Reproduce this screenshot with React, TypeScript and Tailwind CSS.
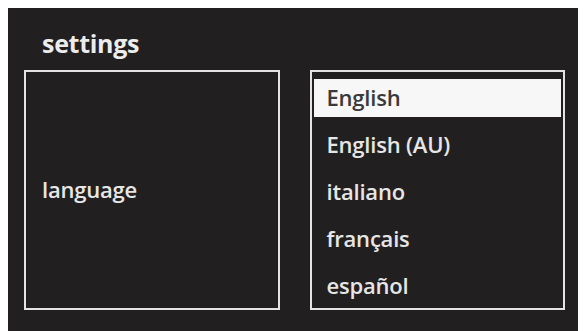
const languages = ["English", "English (AU)", "italiano", "français", "español"];

export default function App() {
  return (
    <div className="w-[584px] h-[331px] bg-white overflow-hidden pt-2 pl-2 font-['Open_Sans',sans-serif]">
      <div className="w-[570px] h-[323px] bg-[#221f20] pl-4 pr-[13px] pt-[19px]">
        {/* Heading */}
        <h1 className="h-[32px] pl-[18px] text-[25px] leading-[32px] font-bold tracking-[-0.3px] text-[#ececec]">
          settings
        </h1>

        <div className="grid grid-cols-2 gap-[30px] mt-[11px]">
          {/* Setting name */}
          <div className="h-[240px] border-2 border-[#e4e4e4] flex items-center pl-4 pb-[2px]">
            <span className="text-[22px] font-semibold text-[#e6e6e6] tracking-[-0.2px]">language</span>
          </div>

          {/* Options */}
          <div className="h-[240px] border-2 border-[#e4e4e4] pt-[7px] px-[2px] flex flex-col gap-[9px]">
            {languages.map((lang, i) => (
              <div
                key={lang}
                className={
                  i === 0
                    ? "h-[38px] flex items-center pl-[13px] pb-[2px] bg-[#f7f7f7] text-[#3a3a3a] text-[22px] font-semibold tracking-[-0.2px]"
                    : "h-[38px] flex items-center pl-[13px] pb-[2px] text-[#e6e6e6] text-[22px] font-semibold tracking-[-0.2px]"
                }
              >
                {lang}
              </div>
            ))}
          </div>
        </div>
      </div>
    </div>
  );
}
